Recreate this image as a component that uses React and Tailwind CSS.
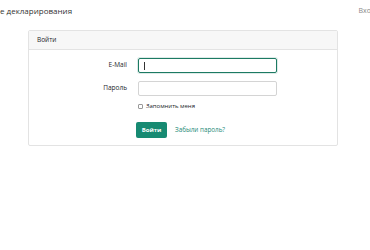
import React from "react";

export default function App() {
  return (
    <div className="w-[370px] h-[250px] bg-white overflow-hidden font-['Open_Sans','Liberation_Sans',sans-serif] text-[#212529]">
      {/* navbar */}
      <nav className="h-[20px] flex items-center justify-between">
        <span className="text-[8px] leading-none pt-[1px] text-[#333]">е декларирования</span>
        <span className="text-[7px] leading-none text-[#888] mr-[-5px]">Вход</span>
      </nav>

      {/* login card */}
      <div className="mt-[10px] ml-[28px] w-[310px] border border-[#e3e3e3] rounded-[2px]">
        <div className="h-[19px] bg-[#f7f7f7] border-b border-[#e3e3e3] flex items-center px-[8px]">
          <span className="text-[6.5px] leading-none">Войти</span>
        </div>

        <div className="pt-[8px] pb-[7px] flex flex-col gap-[8px]">
          <div className="flex items-center">
            <label className="w-[98px] text-right text-[6.5px] leading-none">E-Mail</label>
            <div className="ml-[11px] w-[139px] h-[15px] border border-[#1d7a63] rounded-[2px] flex items-center pl-[5px] shadow-[0_0_0_1px_rgba(29,122,99,0.15)]">
              <span className="w-[1px] h-[8px] bg-[#333]" />
            </div>
          </div>

          <div className="flex items-center">
            <label className="w-[98px] text-right text-[6.5px] leading-none">Пароль</label>
            <div className="ml-[11px] w-[139px] h-[15px] border border-[#d4d4d4] rounded-[2px]" />
          </div>

          <div className="flex items-center ml-[109px] mt-[-1px]">
            <span className="w-[5px] h-[5px] border border-[#999] rounded-[1px] bg-white" />
            <span className="ml-[3px] text-[6px] leading-none">Запомнить меня</span>
          </div>

          <div className="flex items-center ml-[107px] mt-[5px]">
            <button className="w-[31px] h-[16px] bg-[#178a72] rounded-[2px] text-white text-[6px] font-bold leading-none">
              Войти
            </button>
            <span className="ml-[8px] text-[6.3px] leading-none text-[#1d8a78]">Забыли пароль?</span>
          </div>
        </div>
      </div>
    </div>
  );
}
